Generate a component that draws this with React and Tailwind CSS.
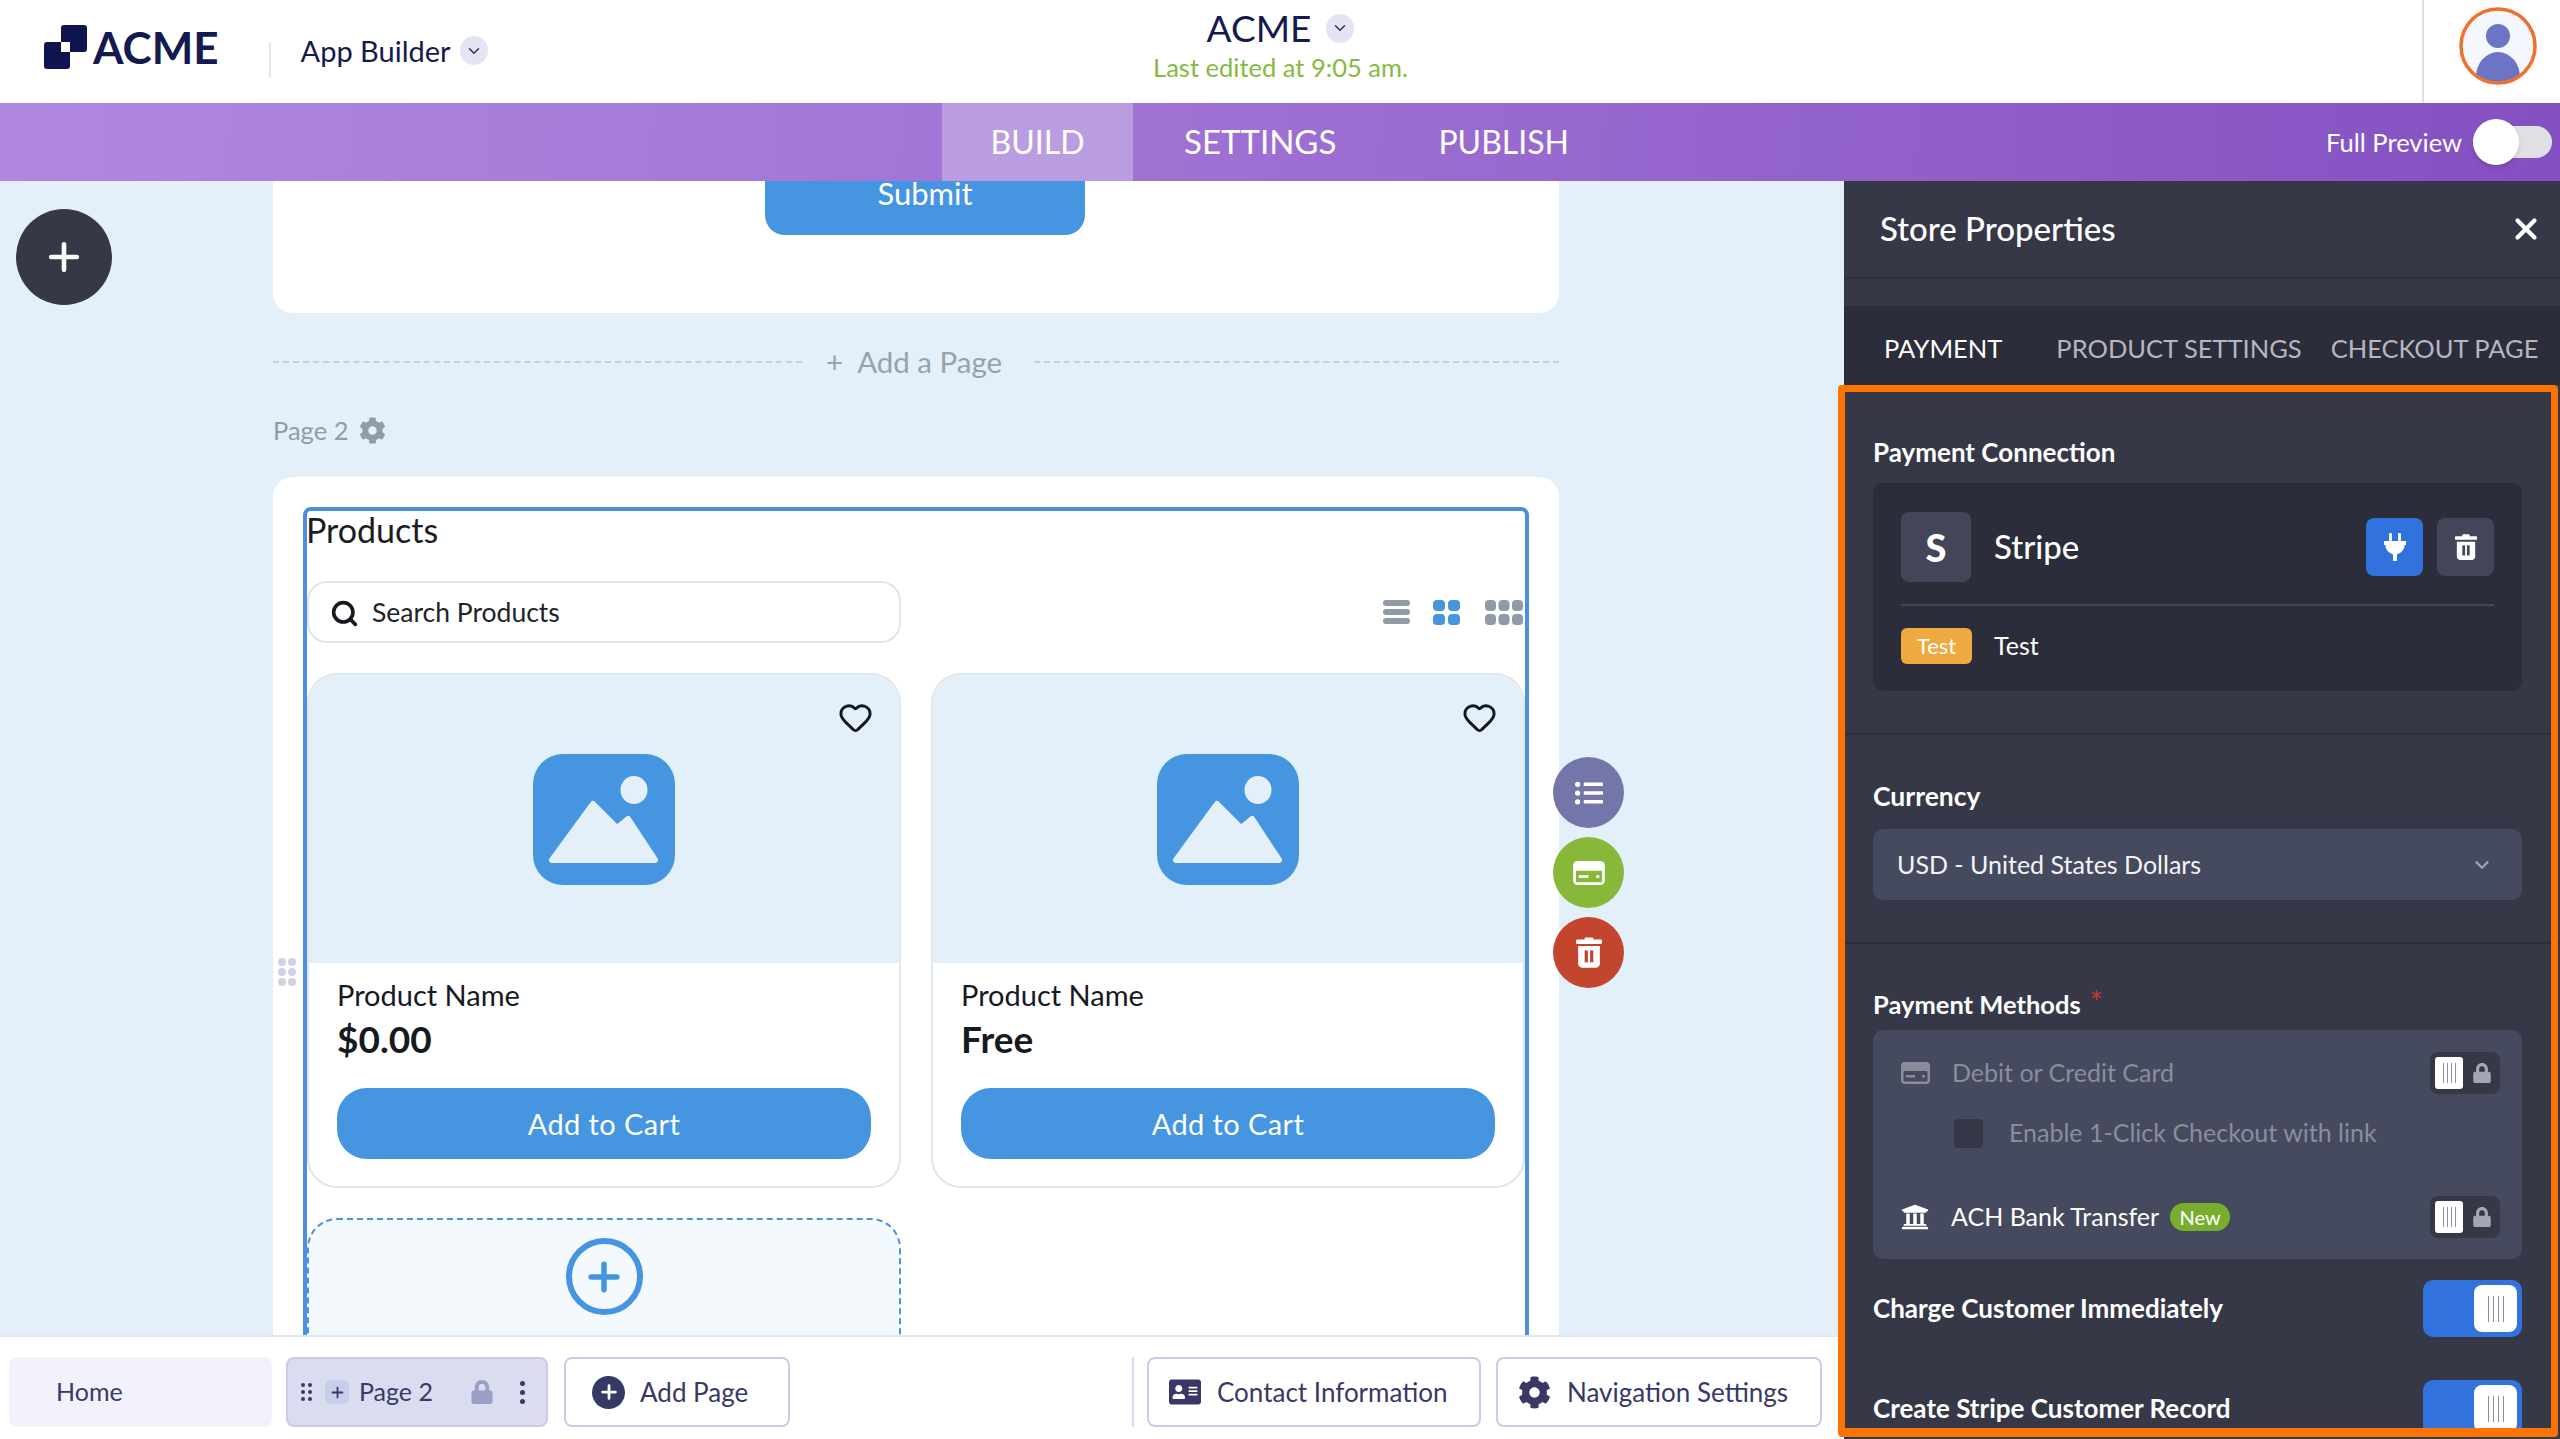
import React from 'react';
import { ChevronDown, Heart, Plus, Search, X } from 'lucide-react';
import { FaAddressCard, FaCog, FaListUl, FaLock, FaUniversity } from 'react-icons/fa';

const Logo = () => (
  <svg width="43" height="44" viewBox="0 0 43 44" className="shrink-0">
    <rect x="17" y="0" width="26" height="27" rx="3" fill="#0e1450" />
    <rect x="0" y="17" width="26" height="27" rx="3" fill="#0e1450" />
    <rect x="17" y="17" width="9" height="10" fill="#fff" />
  </svg>
);

const ChevronChip = ({ className }) => (
  <span className={`flex items-center justify-center w-[28px] h-[29px] rounded-full bg-[#e4e5f4] ${className}`}>
    <ChevronDown size={18} strokeWidth={2} color="#2a2f5c" />
  </span>
);

const ImageIcon = () => (
  <svg width="142" height="131" viewBox="0 0 142 131">
    <rect width="142" height="131" rx="30" fill="#4595e0" />
    <ellipse cx="101" cy="36" rx="13.5" ry="14" fill="#e3f0f9" />
    <path d="M60 50 L84 74 L95 65 L122 106 L19 106 Z" fill="#e3f0f9" stroke="#e3f0f9" strokeWidth="6" strokeLinejoin="round" />
  </svg>
);

const PlugIcon = () => (
  <svg width="22" height="28" viewBox="0 0 22 28" fill="#fff">
    <rect x="5" y="0" width="3" height="8" rx="1.2" />
    <rect x="14" y="0" width="3" height="8" rx="1.2" />
    <path d="M0 8h22v4h-1.500c0 5-3.500 8-7.500 9.500V28h-4v-6.500C5 20 1.500 17 1.500 12H0z" />
  </svg>
);

const TrashIcon = ({ size = 24, slot = '#434659' }) => (
  <svg width={size} height={size * 1.2} viewBox="0 0 24 28" fill="#fff">
    <rect x="0" y="2" width="24" height="4" rx="1" />
    <rect x="8" y="0" width="8" height="3" rx="1" />
    <path d="M2 8h20v16a4 4 0 0 1-4 4H6a4 4 0 0 1-4-4z" />
    <rect x="8" y="12" width="3" height="11" fill={slot} />
    <rect x="13" y="12" width="3" height="11" fill={slot} />
  </svg>
);

const CardIcon = ({ color, band, w = 29, h = 22 }) => (
  <svg width={w} height={h} viewBox="0 0 29 22">
    <rect width="29" height="22" rx="4" fill={color} />
    <rect x="2.500" y="9" width="24" height="10.500" rx="1" fill={band} />
    <rect x="5" y="13" width="9" height="2.500" fill={color} />
    <rect x="21" y="13" width="3" height="2.500" fill={color} />
  </svg>
);

const KnobLines = ({ gap = 'gap-[4px]', h = 'h-[20px]' }) => (
  <span className={`flex ${gap}`}>
    <span className={`w-[1px] ${h} bg-[#8a8d9f]`} />
    <span className={`w-[1px] ${h} bg-[#8a8d9f]`} />
    <span className={`w-[1px] ${h} bg-[#8a8d9f]`} />
    <span className={`w-[1px] ${h} bg-[#8a8d9f]`} />
  </span>
);

const LockedToggle = () => (
  <div className="flex items-center w-[70px] h-[42px] rounded-lg bg-[#363848] pl-[5px] shrink-0">
    <span className="flex items-center justify-center w-[28px] h-[32px] rounded-[3px] bg-white">
      <KnobLines gap="gap-[3px]" h="h-[20px]" />
    </span>
    <FaLock size={20} color="#a5a6b0" className="ml-[9px]" />
  </div>
);

const OnToggle = () => (
  <div className="flex items-center justify-end w-[99px] h-[57px] rounded-[10px] bg-[#3272dc] pr-[5px] shrink-0">
    <span className="flex items-center justify-center w-[43px] h-[47px] rounded-lg bg-white">
      <KnobLines gap="gap-[4px]" h="h-[26px]" />
    </span>
  </div>
);

const ProductCard = ({ price }) => (
  <div className="relative h-[515px] rounded-[30px] border-2 border-[#dfe6ee] bg-white overflow-hidden">
    <div className="flex items-center justify-center h-[288px] bg-[#e3f0f9]">
      <ImageIcon />
    </div>
    <Heart size={35} strokeWidth={2} color="#14171f" className="absolute top-[25px] right-[26px]" />
    <div className="px-[28px]">
      <p className="mt-[14px] text-[29px] leading-[36px] text-[#16191f]">Product Name</p>
      <p className="mt-[4px] text-[37px] leading-[44px] font-bold text-[#16191f]">{price}</p>
      <button className="mt-[27px] w-full h-[71px] rounded-[30px] bg-[#4595e0] text-white text-[29px] tracking-[0.4px]">Add to Cart</button>
    </div>
  </div>
);

const BottomButton = ({ icon, label, className }) => (
  <button className={`flex items-center h-[70px] rounded-lg border-2 border-[#c9cdea] bg-white text-[26px] text-[#363965] ${className}`}>
    {icon}
    {label}
  </button>
);

const Canvas = () => (
  <div className="relative flex-1 overflow-hidden bg-[#e3f0f9]">
    <button className="absolute left-[16px] top-[28px] flex items-center justify-center w-[96px] h-[96px] rounded-full bg-[#363848]">
      <Plus size={44} strokeWidth={2.5} color="#fff" />
    </button>

    <div className="ml-[273px] w-[1286px]">
      <div className="flex justify-center h-[132px] rounded-b-[20px] bg-white overflow-hidden">
        <button className="mt-[-30px] ml-[18px] w-[320px] h-[84px] rounded-[20px] bg-[#4595e0] text-white text-[31px] leading-[20px]">Submit</button>
      </div>

      <div className="flex items-center h-[40px] mt-[29px]">
        <div className="w-[529px] border-t-2 border-dashed border-[#c4d0da]" />
        <span className="ml-[24px] text-[29.5px] text-[#98a2aa] whitespace-nowrap"><span className="mr-[14px]">+</span>Add a Page</span>
        <div className="flex-1 ml-[32px] border-t-2 border-dashed border-[#c4d0da]" />
      </div>

      <div className="flex items-center h-[30px] mt-[33px] gap-[11px] text-[25.5px] text-[#8f9daa]">
        Page 2
        <FaCog size={27} />
      </div>

      <div className="h-[900px] mt-[32px] rounded-[20px] bg-white pt-[30px] pl-[30px]">
        <div className="w-[1226px] h-[900px] rounded-t-[8px] border-4 border-[#4a8fe0]">
          <p className="h-[42px] text-[34px] leading-[38px] text-[#1a1d24] -ml-px">Products</p>
          <div className="flex items-center justify-between h-[62px] mt-[28px] pr-[2px]">
            <div className="flex items-center w-[594px] h-[62px] rounded-[20px] border-2 border-[#dfe6ee] pl-[21px] gap-[13px] pt-[2px] text-[26.5px] text-[#1f2329]">
              <Search size={29} strokeWidth={3} color="#16191f" />
              Search Products
            </div>
            <div className="flex items-center">
              <svg width="27" height="24" viewBox="0 0 27 24" fill="#8f9ba8">
                <rect width="27" height="6" rx="3" />
                <rect y="9" width="27" height="6" rx="3" />
                <rect y="18" width="27" height="6" rx="3" />
              </svg>
              <svg width="27" height="25" viewBox="0 0 27 25" fill="#4595e0" className="ml-[23px]">
                <rect width="12" height="11" rx="4" />
                <rect x="15" width="12" height="11" rx="4" />
                <rect y="14" width="12" height="11" rx="4" />
                <rect x="15" y="14" width="12" height="11" rx="4" />
              </svg>
              <svg width="38" height="25" viewBox="0 0 38 25" fill="#8f9ba8" className="ml-[25px]">
                <rect width="11" height="11" rx="4" />
                <rect x="13.500" width="11" height="11" rx="4" />
                <rect x="27" width="11" height="11" rx="4" />
                <rect y="14" width="11" height="11" rx="4" />
                <rect x="13.500" y="14" width="11" height="11" rx="4" />
                <rect x="27" y="14" width="11" height="11" rx="4" />
              </svg>
            </div>
          </div>
          <div className="grid grid-cols-[594px_594px] gap-x-[30px] gap-y-[30px] mt-[30px]">
            <ProductCard price="$0.00" />
            <ProductCard price="Free" />
            <div className="flex justify-center h-[300px] rounded-[30px] border-2 border-dashed border-[#4595e0] bg-[#f4f9fd] pt-[18px]">
              <div className="flex items-center justify-center w-[77px] h-[77px] rounded-full border-[6px] border-[#4595e0]">
                <Plus size={44} strokeWidth={3} color="#4595e0" />
              </div>
            </div>
          </div>
        </div>
      </div>
    </div>

    <div className="absolute left-[278px] top-[777px] grid grid-cols-2 gap-x-[2px] gap-y-[2px]">
      {[0, 1, 2, 3, 4, 5].map((i) => (
        <span key={i} className="w-[8px] h-[8px] rounded-full bg-[#d1d1e6]" />
      ))}
    </div>

    <div className="absolute left-[1553px] top-[576px] flex flex-col gap-[9px]">
      <span className="flex items-center justify-center w-[71px] h-[71px] rounded-full bg-[#7476a9]"><FaListUl size={28} color="#fff" /></span>
      <span className="flex items-center justify-center w-[71px] h-[71px] rounded-full bg-[#88b83a]"><CardIcon color="#fff" band="#88b83a" w={32} h={24} /></span>
      <span className="flex items-center justify-center w-[71px] h-[71px] rounded-full bg-[#c4452e]"><TrashIcon size={26} slot="#c4452e" /></span>
    </div>
  </div>
);

const BottomBar = () => (
  <div className="flex items-start h-[104px] border-t-2 border-[#e4e6f2] bg-white pt-[20px] pl-[9px] pr-[22px] text-[#383b66]">
    <div className="flex items-center w-[263px] h-[70px] rounded-lg bg-[#f2f2fc] pl-[47px] text-[25px]">Home</div>
    <div className="flex items-center w-[262px] h-[70px] ml-[14px] rounded-lg border-2 border-[#c8cce8] bg-[#dadcef] text-[25px]">
      <span className="grid grid-cols-2 gap-[3px] ml-[13px]">
        {[0, 1, 2, 3, 4, 5].map((i) => (
          <span key={i} className="w-[4px] h-[4px] rounded-full bg-[#363965]" />
        ))}
      </span>
      <span className="flex items-center justify-center w-[24px] h-[24px] ml-[13px] rounded-md bg-[#c8cee9]"><Plus size={17} strokeWidth={2.5} color="#363965" /></span>
      <span className="ml-[10px]">Page 2</span>
      <FaLock size={24} color="#9a9fc6" className="ml-[37px]" />
      <span className="flex flex-col gap-[4px] ml-[26px]">
        <span className="w-[5px] h-[5px] rounded-full bg-[#363965]" />
        <span className="w-[5px] h-[5px] rounded-full bg-[#363965]" />
        <span className="w-[5px] h-[5px] rounded-full bg-[#363965]" />
      </span>
    </div>
    <BottomButton
      className="w-[226px] ml-[16px] pl-[26px] gap-[15px]"
      icon={<span className="flex items-center justify-center w-[33px] h-[33px] rounded-full bg-[#363965]"><Plus size={22} strokeWidth={3} color="#fff" /></span>}
      label="Add Page"
    />
    <div className="w-[2px] h-[70px] ml-auto bg-[#d5d8ee]" />
    <BottomButton className="w-[334px] ml-[13px] pl-[20px] gap-[16px]" icon={<FaAddressCard size={32} />} label="Contact Information" />
    <BottomButton className="w-[326px] ml-[15px] pl-[20px] gap-[16px]" icon={<FaCog size={33} />} label="Navigation Settings" />
  </div>
);

const Panel = () => (
  <div className="relative w-[716px] bg-[#363848] text-white">
    <div className="flex items-center justify-between h-[98px] border-b-2 border-[#2d2f3d] pl-[36px] pr-[17px]">
      <span className="text-[33px] font-medium">Store Properties</span>
      <X size={34} strokeWidth={3} color="#fff" />
    </div>
    <div className="flex items-center h-[79px] mt-[27px] pt-[6px] bg-[#2b2d3b] text-[25.5px] text-[#b5b6c0] whitespace-nowrap">
      <span className="ml-[40px] text-white">PAYMENT</span>
      <span className="ml-[54px]">PRODUCT SETTINGS</span>
      <span className="ml-[29px]">CHECKOUT PAGE</span>
    </div>

    <div className="h-[1054px] overflow-hidden pl-[29px] pr-[38px] text-[25px]">
      <p className="mt-[49px] h-[36px] leading-[36px] text-[26px] font-bold">Payment Connection</p>
      <div className="mt-[13px] h-[208px] rounded-[10px] bg-[#2b2d3b] px-[28px] pt-[29px]">
        <div className="flex items-center h-[70px]">
          <span className="flex items-center justify-center w-[70px] h-[70px] rounded-lg bg-[#434659] text-[38px] font-black">S</span>
          <span className="ml-[23px] text-[33px] font-medium">Stripe</span>
          <span className="flex items-center justify-center w-[57px] h-[58px] ml-auto rounded-lg bg-[#3272dc]"><PlugIcon /></span>
          <span className="flex items-center justify-center w-[57px] h-[58px] ml-[14px] rounded-lg bg-[#434659]"><TrashIcon size={22} /></span>
        </div>
        <div className="h-[2px] mt-[22px] bg-[#434659]" />
        <div className="flex items-center mt-[21px]">
          <span className="flex items-center justify-center w-[71px] h-[36px] rounded-md bg-[#eeaa40] text-[22px]">Test</span>
          <span className="ml-[22px] text-[25px]">Test</span>
        </div>
      </div>

      <div className="h-[2px] -ml-[29px] -mr-[38px] mt-[42px] bg-[#2d2f3d]" />
      <p className="mt-[43px] h-[36px] leading-[36px] text-[26.5px] font-bold">Currency</p>
      <div className="flex items-center justify-between h-[71px] mt-[15px] rounded-[10px] bg-[#464a5e] pl-[24px] pr-[29px] text-[#f3f3f6]">
        USD - United States Dollars
        <ChevronDown size={22} strokeWidth={2.5} color="#a3a5b2" />
      </div>

      <div className="h-[2px] -ml-[29px] -mr-[38px] mt-[42px] bg-[#2d2f3d]" />
      <p className="flex mt-[42px] h-[36px] leading-[36px] text-[25.5px] font-bold">Payment Methods<span className="ml-[9px] -mt-[3px] text-[30px] font-normal text-[#d0362c]">*</span></p>
      <div className="h-[229px] mt-[8px] rounded-[10px] bg-[#464a5e] pl-[21px] pr-[22px] pt-[22px]">
        <div className="flex items-center h-[42px] pl-[7px] text-[#8b8d9c]">
          <CardIcon color="#8a8c9a" band="#464a5e" />
          <span className="ml-[22px]">Debit or Credit Card</span>
          <span className="ml-auto"><LockedToggle /></span>
        </div>
        <div className="flex items-center h-[30px] mt-[24px] pl-[60px] text-[#8b8d9c]">
          <span className="w-[29px] h-[29px] rounded bg-[#363848]" />
          <span className="ml-[26px]">Enable 1-Click Checkout with link</span>
        </div>
        <div className="h-[1px] mt-[24px] bg-[#3f4260]" />
        <div className="flex items-center h-[42px] mt-[23px] pl-[7px]">
          <FaUniversity size={28} color="#fff" />
          <span className="ml-[22px]">ACH Bank Transfer</span>
          <span className="flex items-center justify-center w-[60px] h-[28px] ml-[11px] rounded-full bg-[#78ad2f] text-[20px]">New</span>
          <span className="ml-auto"><LockedToggle /></span>
        </div>
      </div>

      <div className="flex items-center justify-between h-[57px] mt-[21px] text-[26px] font-bold">
        Charge Customer Immediately
        <OnToggle />
      </div>
      <div className="flex items-center justify-between h-[57px] mt-[43px] text-[26px] font-bold">
        Create Stripe Customer Record
        <OnToggle />
      </div>
    </div>

    <div className="absolute left-[-6px] top-[204px] w-[720px] h-[1052px] rounded-[4px] border-x-[7px] border-t-[7px] border-b-[9px] border-[#ff7300] pointer-events-none" />
  </div>
);

export default function App() {
  return (
    <div className="flex flex-col w-[2560px] h-[1439px] overflow-hidden bg-white font-[Lato,sans-serif]">
      <header className="relative flex items-center h-[103px] bg-white text-[#14194f]">
        <div className="flex items-center ml-[44px] -mt-[10px]">
          <Logo />
          <span className="ml-[6px] text-[44px] font-bold leading-none">ACME</span>
        </div>
        <div className="w-[2px] h-[36px] ml-[50px] mt-[16px] bg-[#e4e6f4]" />
        <span className="ml-[30px] -mt-[2px] text-[29px]">App Builder</span>
        <ChevronChip className="ml-[9px] -mt-[2px]" />
        <div className="absolute left-[1154px] top-[8px] w-[253px] flex flex-col items-center">
          <div className="flex items-center">
            <span className="text-[37px] leading-[40px]">ACME</span>
            <ChevronChip className="ml-[15px]" />
          </div>
          <span className="mt-[3px] text-[25.5px] leading-[32px] text-[#84bb3c] whitespace-nowrap">Last edited at 9:05 am.</span>
        </div>
        <div className="flex items-start w-[138px] h-[103px] ml-auto border-l-2 border-[#dcdff0] pl-[35px] pt-[7px]">
          <svg width="78" height="78" viewBox="0 0 78 78" className="shrink-0">
            <clipPath id="avatar"><circle cx="39" cy="39" r="36" /></clipPath>
            <circle cx="39" cy="39" r="37" fill="#f4f7fe" />
            <g clipPath="url(#avatar)" fill="#6c75c4">
              <ellipse cx="39" cy="29" rx="12" ry="12" />
              <ellipse cx="39" cy="70" rx="22" ry="25" />
            </g>
            <circle cx="39" cy="39" r="37" fill="none" stroke="#f2702e" strokeWidth="3.500" />
          </svg>
        </div>
      </header>

      <nav className="relative flex items-center h-[78px] bg-[linear-gradient(95deg,#b187e0,#9f72d4_45%,#8450c1)] text-white">
        <span className="flex items-center justify-center w-[191px] h-[78px] ml-[942px] bg-[#b99de0] text-[32px]">BUILD</span>
        <span className="ml-[51px] text-[33px]">SETTINGS</span>
        <span className="ml-[102px] text-[32px]">PUBLISH</span>
        <span className="ml-auto mr-[11px] text-[25.5px]">Full Preview</span>
        <div className="relative w-[79px] h-[32px] mr-[8px] rounded-full bg-[#dfe0e6]">
          <span className="absolute left-0 top-[-7px] w-[46px] h-[46px] rounded-full bg-white shadow-md" />
        </div>
      </nav>

      <main className="flex flex-1 min-h-0">
        <div className="flex flex-col flex-1 min-w-0">
          <Canvas />
          <BottomBar />
        </div>
        <Panel />
      </main>
    </div>
  );
}
